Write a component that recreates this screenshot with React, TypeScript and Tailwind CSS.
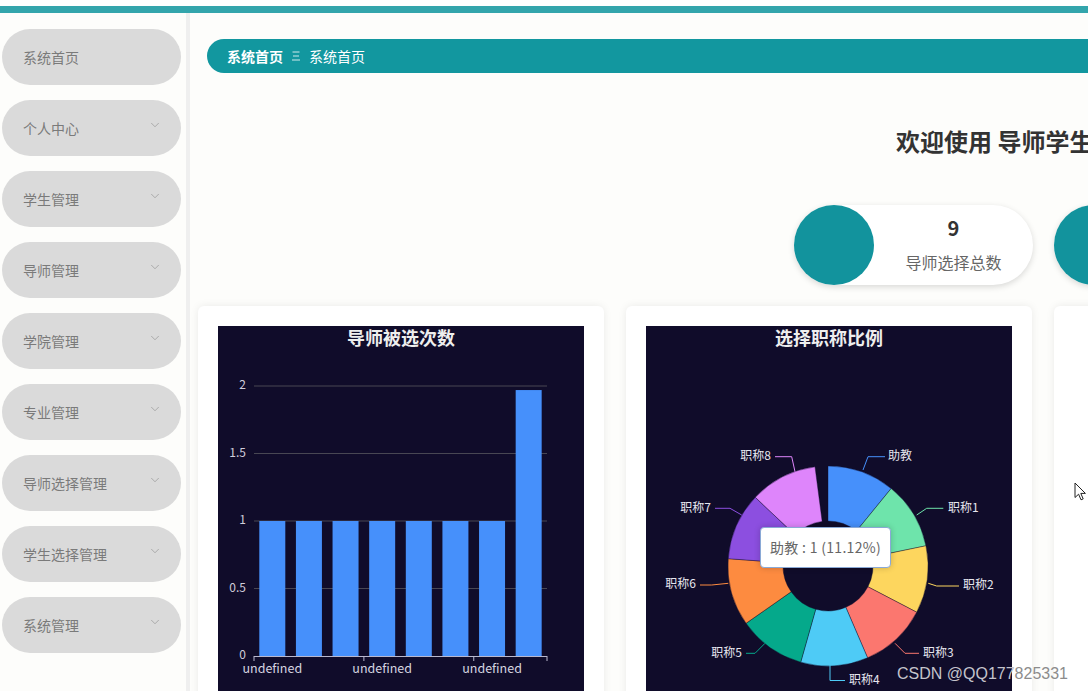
import React from "react";
import { ChevronDown } from "lucide-react";

const menu = [
  { label: "系统首页", sub: false },
  { label: "个人中心", sub: true },
  { label: "学生管理", sub: true },
  { label: "导师管理", sub: true },
  { label: "学院管理", sub: true },
  { label: "专业管理", sub: true },
  { label: "导师选择管理", sub: true },
  { label: "学生选择管理", sub: true },
  { label: "系统管理", sub: true },
];

function BarChart() {
  const x0 = 36;
  const x1 = 329;
  const yZero = 330;
  const unit = 135;
  const cat = (x1 - x0) / 8;
  const values = [1, 1, 1, 1, 1, 1, 1, 1.97];
  const ticks = [
    { v: 2, l: "2" },
    { v: 1.5, l: "1.5" },
    { v: 1, l: "1" },
    { v: 0.5, l: "0.5" },
    { v: 0, l: "0" },
  ];
  return (
    <svg width="366" height="400" viewBox="0 0 366 400">
      <text x="183" y="14" textAnchor="middle" dominantBaseline="middle" fill="#eeeeee" fontSize="18" fontWeight="700">
        导师被选次数
      </text>
      {ticks.map((t) => {
        const y = yZero - t.v * unit;
        return (
          <g key={t.l}>
            {t.v > 0 && <line x1={x0} x2={x1} y1={y} y2={y} stroke="#484753" strokeWidth="1" />}
            <text x="28" y={y} textAnchor="end" dominantBaseline="middle" fill="#cfcdda" fontSize="12">
              {t.l}
            </text>
          </g>
        );
      })}
      {values.map((v, i) => (
        <rect key={i} x={x0 + i * cat + 5.3} y={yZero - v * unit} width="26" height={v * unit} fill="#4690fb" />
      ))}
      <line x1={x0} x2={x1} y1={yZero + 0.5} y2={yZero + 0.5} stroke="#b9b8ce" strokeWidth="1" />
      {[0, 3, 6, 8].map((k) => (
        <line key={k} x1={x0 + k * cat} x2={x0 + k * cat} y1={yZero} y2={yZero + 5} stroke="#b9b8ce" strokeWidth="1" />
      ))}
      {[0, 3, 6].map((k) => (
        <text key={k} x={x0 + k * cat + cat / 2} y={yZero + 14} textAnchor="middle" dominantBaseline="middle" fill="#d6d5e0" fontSize="12.5">
          undefined
        </text>
      ))}
    </svg>
  );
}

function PieChart() {
  const cx = 182;
  const cy = 240;
  const R = 100;
  const r = 45;
  const step = 39.17;
  const colors = ["#4690fb", "#6ee4ab", "#fdd65e", "#fb776f", "#4ecbf6", "#05a98b", "#fd8b40", "#8c4fe0", "#de85fb"];
  const pt = (a: number, rad: number) => {
    const t = (a * Math.PI) / 180;
    return [cx + rad * Math.sin(t), cy - rad * Math.cos(t)];
  };
  const seg = (i: number) => {
    const a0 = i * step;
    const a1 = (i + 1) * step;
    const [ox0, oy0] = pt(a0, R);
    const [ox1, oy1] = pt(a1, R);
    const [ix1, iy1] = pt(a1, r);
    const [ix0, iy0] = pt(a0, r);
    return `M${ox0} ${oy0} A${R} ${R} 0 0 1 ${ox1} ${oy1} L${ix1} ${iy1} A${r} ${r} 0 0 0 ${ix0} ${iy0} Z`;
  };
  const labels = [
    { t: "助教", pts: "217,144 222,130.7 239,130.7", x: 242, y: 130.7, a: "start" },
    { t: "职称1", pts: "270.7,189 280.7,182.3 297.3,182.3", x: 302, y: 182.3, a: "start" },
    { t: "职称2", pts: "282.3,257.3 290.7,260 313,260", x: 317, y: 260, a: "start" },
    { t: "职称3", pts: "249,317.3 259,327.3 273,327.3", x: 277, y: 327.3, a: "start" },
    { t: "职称4", pts: "184,339 184,354.5 199,354.5", x: 203, y: 354.5, a: "start" },
    { t: "职称5", pts: "119,317.3 109,327.3 100,327.3", x: 96, y: 327.3, a: "end" },
    { t: "职称6", pts: "82.3,257.3 65.7,259 54,259", x: 50, y: 259, a: "end" },
    { t: "职称7", pts: "95.7,189 84,182.3 69,182.3", x: 65, y: 182.3, a: "end" },
    { t: "职称8", pts: "149,145.7 145.7,130.7 129,130.7", x: 125, y: 130.7, a: "end" },
  ];
  return (
    <svg width="366" height="400" viewBox="0 0 366 400">
      <text x="183" y="14" textAnchor="middle" dominantBaseline="middle" fill="#eeeeee" fontSize="18" fontWeight="700">
        选择职称比例
      </text>
      {colors.map((c, i) => (
        <path key={i} d={seg(i)} fill={c} stroke="#100c2a" strokeWidth="0.4" />
      ))}
      {labels.map((l, i) => (
        <g key={l.t}>
          <polyline points={l.pts} fill="none" stroke={colors[i]} strokeWidth="1" />
          <text x={l.x} y={l.y} textAnchor={l.a as "start" | "end"} dominantBaseline="middle" fill="#e6e6ee" fontSize="12">
            {l.t}
          </text>
        </g>
      ))}
    </svg>
  );
}

export default function App() {
  return (
    <div className="relative w-[1088px] h-[691px] overflow-hidden bg-[#fdfdfb] font-['Noto_Sans_CJK_SC','Noto_Sans',sans-serif]">
      <div className="h-[6px] bg-white" />
      <div className="h-[7px] bg-[#33a5ac]" />
      <div className="flex">
        <aside className="w-[190px] h-[678px] shrink-0 bg-[#fdfdfb] border-r-[4px] border-[#efefef] pt-[16px] flex flex-col gap-[15px]">
          {menu.map((m) => (
            <div
              key={m.label}
              className="ml-[2px] w-[179px] h-[56px] rounded-full bg-[#dadada] flex items-center justify-between pl-[21px] pr-[19px] text-[14px] text-[#7a7a7a]"
            >
              <span>{m.label}</span>
              {m.sub && <ChevronDown size={14} strokeWidth={1.1} className="text-[#8f8f8f] -mt-[6px]" />}
            </div>
          ))}
        </aside>
        <main className="w-[1400px] shrink-0 pl-[8px] pt-[26px]">
          <div className="ml-[9px] h-[34px] rounded-l-full bg-[#12979f] flex items-center pl-[20px] text-[14px] text-white">
            <span className="font-bold">系统首页</span>
            <svg width="8" height="10" viewBox="0 0 8 10" className="mx-[9px] opacity-80">
              <line x1="0.5" y1="1" x2="7.5" y2="1" stroke="white" strokeWidth="1" />
              <line x1="1" y1="5" x2="7" y2="5" stroke="white" strokeWidth="1" />
              <line x1="0" y1="9" x2="8" y2="9" stroke="white" strokeWidth="1" />
            </svg>
            <span>系统首页</span>
          </div>
          <div className="mt-[52px] pl-[698px] h-[32px] flex items-center text-[24px] font-bold text-[#333333] whitespace-nowrap">
            欢迎使用 导师学生双选系统
          </div>
          <div className="mt-[48px] pl-[596px] flex gap-[21px]">
            <div className="w-[239px] h-[80px] rounded-full bg-white shadow-[0_2px_6px_rgba(0,0,0,0.15)] flex items-center">
              <div className="w-[80px] h-[80px] rounded-full bg-[#12939d]" />
              <div className="flex-1 flex flex-col items-center">
                <div className="text-[20px] font-bold text-[#333333] leading-[24px]">9</div>
                <div className="mt-[10px] text-[16px] text-[#666666] leading-[24px]">导师选择总数</div>
              </div>
            </div>
            <div className="w-[239px] h-[80px] rounded-full bg-white shadow-[0_2px_6px_rgba(0,0,0,0.15)] flex items-center">
              <div className="w-[80px] h-[80px] rounded-full bg-[#12939d]" />
              <div className="flex-1 flex flex-col items-center">
                <div className="text-[20px] font-bold text-[#333333] leading-[24px]">6</div>
                <div className="mt-[10px] text-[16px] text-[#666666] leading-[24px]">学生选择总数</div>
              </div>
            </div>
          </div>
          <div className="mt-[21px] flex gap-[22px]">
            <div className="w-[406px] h-[440px] rounded-md bg-white shadow-[0_0_8px_rgba(0,0,0,0.08)] p-[20px]">
              <div className="w-[366px] h-[400px] bg-[#100c2a]">
                <BarChart />
              </div>
            </div>
            <div className="w-[406px] h-[440px] rounded-md bg-white shadow-[0_0_8px_rgba(0,0,0,0.08)] p-[20px]">
              <div className="relative w-[366px] h-[400px] bg-[#100c2a]">
                <PieChart />
                <div className="absolute left-[114px] top-[201px] w-[131px] h-[41px] rounded-[4px] bg-white border border-[#8aa9d6] shadow-[0_0_6px_rgba(0,0,0,0.2)] flex items-center justify-center text-[14px] text-[#666666] whitespace-nowrap tracking-[0.3px]">
                  助教 : 1 (11.12%)
                </div>
              </div>
            </div>
            <div className="w-[406px] h-[440px] rounded-md bg-white shadow-[0_0_8px_rgba(0,0,0,0.08)] p-[20px]" />
          </div>
        </main>
      </div>
      <div className="absolute left-[897px] top-[662px] text-[16px] font-['Liberation_Sans',sans-serif] whitespace-nowrap">
        <span className="text-[#c4c4cc]">CSDN @QQ177</span>
        <span className="text-[#8c8c8c]">825331</span>
      </div>
      <svg className="absolute left-[1074px] top-[482px]" width="13" height="20" viewBox="0 0 13 20">
        <path d="M1 1 L1 15.5 L4.6 12.2 L7 17.8 L9.2 16.9 L6.8 11.4 L11.4 11.4 Z" fill="white" stroke="#222" strokeWidth="1" strokeLinejoin="round" />
      </svg>
    </div>
  );
}
